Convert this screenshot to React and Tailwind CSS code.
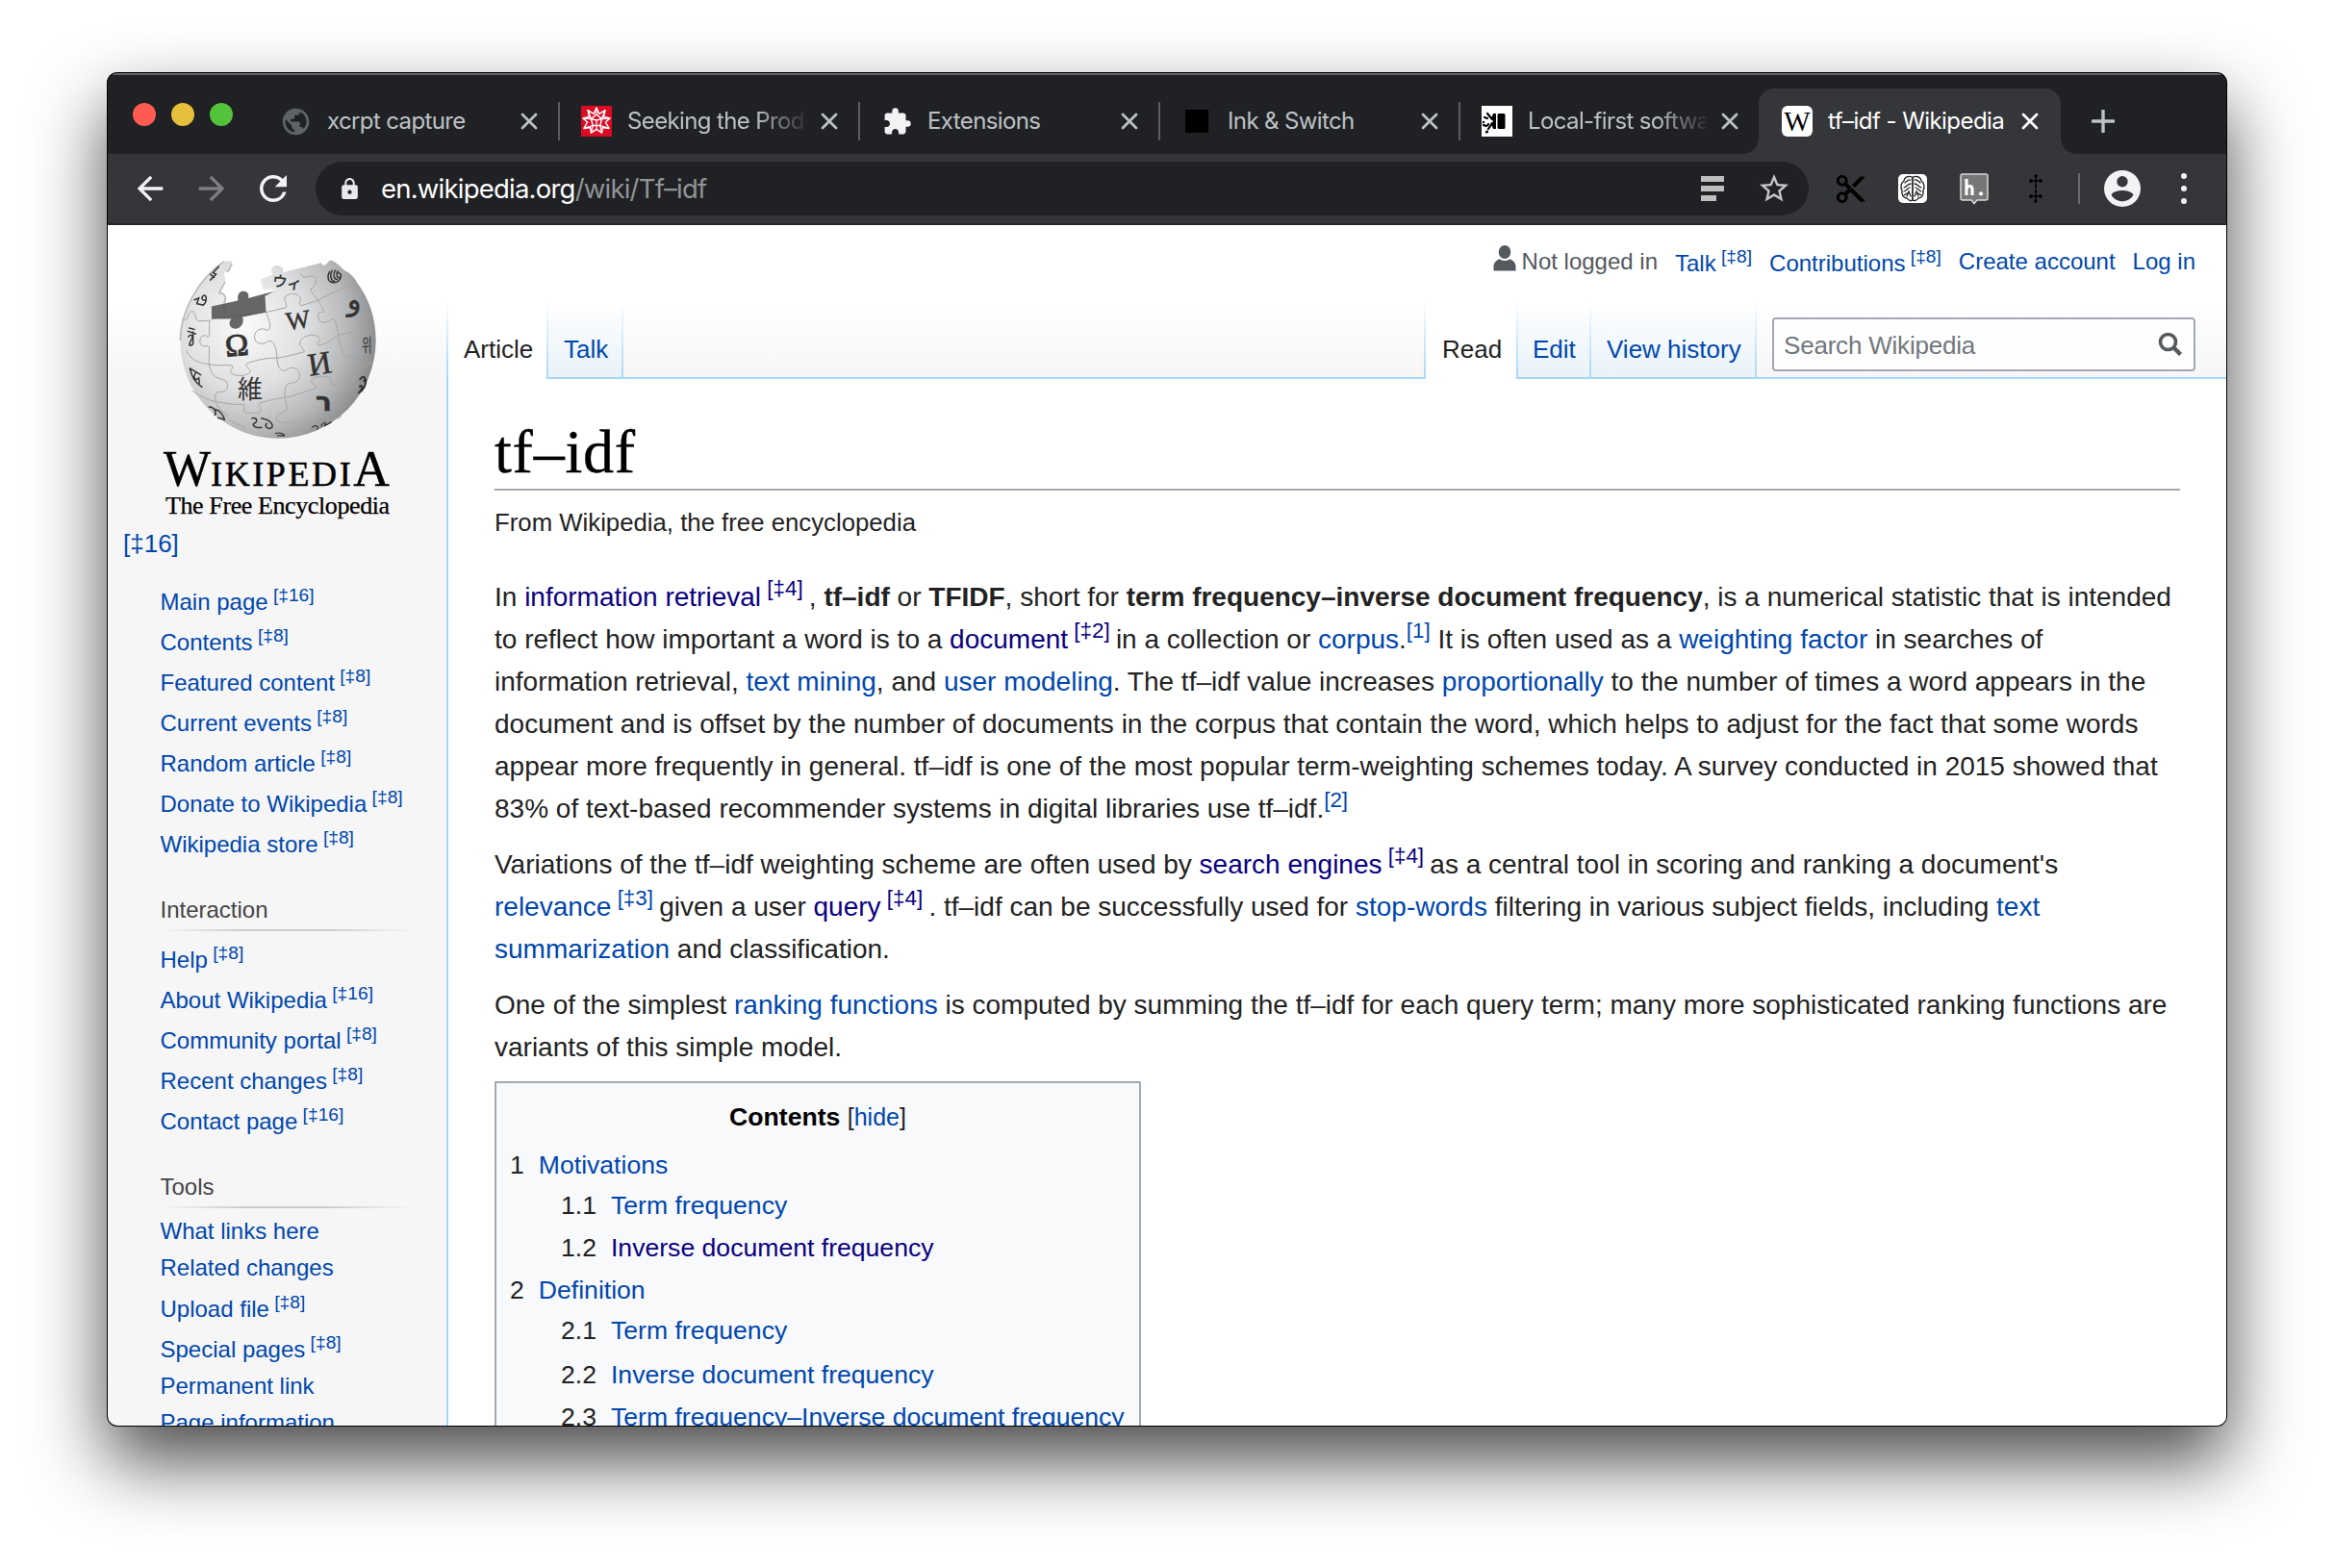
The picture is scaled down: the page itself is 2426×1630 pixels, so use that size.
import React from "react";
import {
  MdPublic,
  MdExtension,
  MdLock,
  MdRefresh,
  MdArrowBack,
  MdArrowForward,
  MdStarBorder,
  MdContentCut,
} from "react-icons/md";

/* ---------- Browser chrome ---------- */

const Cross = ({ className }) => (
  <svg viewBox="0 0 18 18" className={"h-[18px] w-[18px] shrink-0 " + className}>
    <path d="M2 2L16 16M16 2L2 16" stroke="currentColor" strokeWidth="2.8" strokeLinecap="round" />
  </svg>
);

const SpikeyIcon = () => (
  <svg viewBox="0 0 32 32" className="h-8 w-8">
    <rect width="32" height="32" fill="#dd0a24" />
    <g fill="none" stroke="#fff" strokeWidth="1.5" strokeLinejoin="round">
      <path d="M16 2L18.8 8.4L25 4.6L23.6 11.4L30 13L25.4 17L29 23.4L22.4 22.6L21.6 28L16 24.4L10.4 28L9.6 22.6L3 23.4L6.6 17L2 13L8.4 11.4L7 4.600L13.200 8.400Z" />
      <path d="M16 9L21.500 13.500L19.800 20.500H12.200L10.500 13.500Z" />
      <path d="M16 2V9M25 4.600L21.500 13.500M30 13L21.500 13.500M29 23.400L19.800 20.500M21.600 28L19.800 20.500M10.400 28L12.200 20.500M3 23.400L12.200 20.500M2 13L10.500 13.500M7 4.600L10.500 13.500M16 15V24.400M16 15L10.500 13.500M16 15L21.500 13.500" strokeWidth="1.300" />
    </g>
  </svg>
);

const InkIcon = () => (
  <svg viewBox="0 0 32 32" className="h-8 w-8">
    <rect width="32" height="32" fill="#fff" />
    <path d="M12 8H15V24H12L10 19L12 16L10 13Z" fill="#000" />
    <rect x="16.500" y="8" width="8" height="16" rx="1.500" fill="#000" />
    <path d="M6 8L11 14M3 12L6 13M2 20Q6 22 7 19M11 18L7 24" stroke="#000" strokeWidth="2.200" fill="none" strokeLinecap="round" />
    <circle cx="5.500" cy="27" r="1.600" />
    <circle cx="2" cy="17" r="1.200" />
  </svg>
);

const WIcon = () => (
  <span className="flex h-8 w-8 items-center justify-center rounded-[6px] bg-white">
    <span className="font-['Liberation_Serif',serif] text-[29px] leading-8 text-black">W</span>
  </span>
);

const tabs = [
  { title: "xcrpt capture", icon: <MdPublic className="mr-[2px] h-[33px] w-[33px] shrink-0 text-[#5f6368]" /> },
  { title: "Seeking the Prod", icon: <SpikeyIcon />, faded: true },
  { title: "Extensions", icon: <MdExtension className="h-[31px] w-[31px] shrink-0 text-[#f1f3f4]" /> },
  { title: "Ink & Switch", icon: <span className="h-6 w-6 bg-black" /> },
  { title: "Local-first softwa", icon: <InkIcon />, faded: true },
];

const Tab = ({ tab, first }) => (
  <div className="flex h-[68px] w-[312px] shrink-0 items-center">
    <span className={first ? "h-10 w-[2px]" : "h-10 w-[2px] bg-[#5a5c60]"} />
    <span className="ml-[22px] flex h-8 w-8 shrink-0 items-center justify-center">{tab.icon}</span>
    <span
      className={
        "ml-4 w-[185px] text-[24px] leading-[32px] tracking-[-0.62px] whitespace-nowrap text-[#bdc1c6] " +
        (tab.faded ? "[mask-image:linear-gradient(to_right,#000_72%,rgba(0,0,0,0.1))]" : "")
      }
    >
      {tab.title}
    </span>
    <Cross className="ml-4 text-[#bdc1c6]" />
  </div>
);

const TabStrip = () => (
  <div className="flex h-[84px] shrink-0 bg-[#202124] pt-4 shadow-[inset_0_2px_0_#636665]">
    <div className="mt-[15px] ml-[26px] flex w-[130px] gap-4">
      <span className="h-6 w-6 rounded-full bg-[#ff5b52]" />
      <span className="h-6 w-6 rounded-full bg-[#e6c03b]" />
      <span className="h-6 w-6 rounded-full bg-[#53c33b]" />
    </div>
    {tabs.map((t, i) => (
      <Tab key={t.title} tab={t} first={i === 0} />
    ))}
    <div className="relative flex h-[68px] w-[314px] shrink-0 items-center rounded-t-[16px] bg-[#35363a]">
      <span className="absolute bottom-0 -left-4 h-4 w-4 bg-[radial-gradient(circle_at_0_0,transparent_15.5px,#35363a_16px)]" />
      <span className="absolute -right-4 bottom-0 h-4 w-4 bg-[radial-gradient(circle_at_100%_0,transparent_15.5px,#35363a_16px)]" />
      <span className="ml-6">
        <WIcon />
      </span>
      <span className="ml-4 w-[185px] text-[24px] leading-[32px] tracking-[-0.55px] whitespace-nowrap text-white">
        tf–idf - Wikipedia
      </span>
      <Cross className="ml-4 text-white" />
    </div>
    <svg viewBox="0 0 24 24" className="mt-[22px] ml-8 h-6 w-6">
      <path d="M12 1V23M1 12H23" stroke="#bdc1c6" strokeWidth="3.400" strokeLinecap="round" />
    </svg>
  </div>
);

const BrainIcon = () => (
  <svg viewBox="0 0 30 30" className="h-[30px] w-[30px]">
    <rect width="30" height="30" rx="5" fill="#fff" />
    <g fill="none" stroke="#222" strokeWidth="1.300" strokeLinecap="round">
      <path d="M15 3V27" strokeWidth="1.700" />
      <path d="M14 3C10 1 6 4 6 7C3 9 2 14 4 17C3 22 6 25 9 25C11 28 14 28 15 27C16 28 19 28 21 25C24 25 27 22 26 17C28 14 27 9 24 7C24 4 20 1 16 3" />
      <path d="M13 6C10 5 9 8 7 9M13 10C10 10 9 13 6 14M12 14C9 15 9 17 6 18M17 6C20 5 21 8 23 9M17 10C20 10 21 13 24 14M18 14C21 15 21 17 24 18M9 23L11 18L13 23M17 23L19 18L21 23M9 20L6 22M21 20L24 22" />
    </g>
  </svg>
);

const HypothesisIcon = () => (
  <svg viewBox="0 0 30 33" className="h-[33px] w-[30px]">
    <path d="M3 1H27Q29 1 29 3V26Q29 28 27 28H18L15 31.500L12 28H3Q1 28 1 26V3Q1 1 3 1Z" fill="#777" stroke="#d9d9d9" strokeWidth="1.500" />
    <path d="M7 6V23M7 17Q7 13.500 10.200 13.500Q13 13.500 13 17V23" fill="none" stroke="#fff" strokeWidth="3.200" />
    <circle cx="22" cy="21.300" r="2.100" fill="#fff" />
  </svg>
);

const DaggerIcon = () => (
  <svg viewBox="0 0 14 30" className="h-[30px] w-[14px]">
    <path d="M7 1V29M2 7H12M2 23H12" stroke="#000" strokeWidth="1.200" />
    <g fill="#000">
      <circle cx="7" cy="2" r="1.800" />
      <circle cx="7" cy="28" r="1.800" />
      <circle cx="2" cy="7" r="1.900" />
      <circle cx="12" cy="7" r="1.900" />
      <circle cx="2" cy="23" r="1.900" />
      <circle cx="12" cy="23" r="1.900" />
      <circle cx="7" cy="7" r="1.600" />
      <circle cx="7" cy="23" r="1.600" />
      <circle cx="7" cy="12" r="1.200" />
      <circle cx="7" cy="18" r="1.200" />
    </g>
  </svg>
);

const AvatarIcon = () => (
  <svg viewBox="-19 -19 38 38" className="h-[38px] w-[38px]">
    <circle r="19" fill="#f1f3f4" />
    <circle cy="-7.300" r="5.700" fill="#35363a" />
    <path d="M-11.500 6.500C-9.500 3 -4 2 0 2S9.500 3 11.500 6.500C9.500 10.500 4.500 13.300 0 13.300S-9.500 10.500 -11.500 6.500Z" fill="#35363a" />
  </svg>
);

const Toolbar = () => (
  <div className="flex h-[74px] shrink-0 items-center border-b-2 border-[#28282b] bg-[#35363a]">
    <MdArrowBack className="ml-[24px] h-[40px] w-[40px] text-[#f1f3f4]" />
    <MdArrowForward className="ml-[24px] h-[40px] w-[40px] text-[#7d7e81]" />
    <MdRefresh className="ml-[23px] h-[42px] w-[42px] text-[#f1f3f4]" />
    <div className="ml-[23px] flex h-14 w-[1552px] items-center rounded-full bg-[#202124]">
      <MdLock className="ml-[23px] h-[25px] w-[25px] text-[#e8eaed]" />
      <div className="ml-[20px] text-[27.5px] leading-9 tracking-[-0.78px] text-white">
        en.wikipedia.org<span className="text-[#919397]">/wiki/Tf–idf</span>
      </div>
      <div className="ml-auto flex w-6 flex-col gap-1">
        <span className="h-[6px] w-6 bg-[#bdbebe]" />
        <span className="h-[6px] w-6 bg-[#bdbebe]" />
        <span className="h-[6px] w-4 bg-[#bdbebe]" />
      </div>
      <MdStarBorder className="mr-[18px] ml-[34px] h-[36px] w-[36px] text-[#c4c5c7]" />
    </div>
    <MdContentCut className="ml-[26px] h-[35px] w-[35px] text-black" />
    <span className="ml-[32px]">
      <BrainIcon />
    </span>
    <span className="ml-[34px]">
      <HypothesisIcon />
    </span>
    <span className="ml-[42px]">
      <DaggerIcon />
    </span>
    <span className="ml-[37px] h-8 w-[2px] bg-[#6a6b6e]" />
    <span className="ml-[25px]">
      <AvatarIcon />
    </span>
    <div className="ml-[42px] flex flex-col gap-[7px]">
      <span className="h-[6px] w-[6px] rounded-full bg-[#f1f3f4]" />
      <span className="h-[6px] w-[6px] rounded-full bg-[#f1f3f4]" />
      <span className="h-[6px] w-[6px] rounded-full bg-[#f1f3f4]" />
    </div>
  </div>
);

/* ---------- Wikipedia logo ---------- */

const Globe = () => (
  <svg viewBox="225 115 625 570" className="h-[190px] w-[208px]">
    <defs>
      <radialGradient id="ball" gradientUnits="userSpaceOnUse" cx="430" cy="330" r="440">
        <stop offset="0" stopColor="#fafafa" />
        <stop offset="0.450" stopColor="#dedfe0" />
        <stop offset="0.750" stopColor="#b4b6b8" />
        <stop offset="1" stopColor="#808284" />
      </radialGradient>
    </defs>
    <path
      d="M368 126C385 122 398 126 394 134C384 144 392 154 376 158C362 156 376 176 372 190L354 224C372 224 378 240 368 258L330 270V305H385L430 300L500 284L497 232L525 218C515 204 500 220 490 212L482 182L520 168C512 150 520 138 537 139C552 140 556 150 552 160L672 130C684 150 690 126 702 122C720 126 730 142 748 156C760 160 776 176 783 190C820 240 843 300 843 373A305 305 0 0 1 232 373C232 280 290 180 368 126Z"
      fill="url(#ball)"
    />
    <path d="M368 126C290 180 232 280 232 373M394 134C384 144 392 154 376 158M372 190L354 224C372 224 378 240 368 258" fill="none" stroke="#b9bbbc" strokeWidth="5" />
    <path d="M330 266L412 248C410 224 420 219 430 219C444 220 448 230 444 241L525 219L497 234L500 284L426 300C434 318 420 336 405 336C386 336 380 318 392 305H330Z" fill="#666" />
    <path d="M368 262L372 288M330 305L500 284" stroke="#555" strokeWidth="2" fill="none" />
    <g fill="none" stroke="#a3a5a7" strokeWidth="3">
      <path d="M240 306C262 316 250 284 268 282C286 282 274 314 292 312L326 310" />
      <path d="M324 310C320 330 328 360 318 362C306 350 290 362 294 380C300 398 316 386 322 392C326 420 316 440 326 462C336 496 360 490 374 498C388 520 374 536 356 534C336 530 338 560 350 580C364 600 380 606 384 610" />
      <path d="M500 285C510 310 520 332 505 342C488 330 464 338 464 362C466 386 490 388 508 374C524 370 534 400 534 428C536 460 548 470 562 466C580 448 606 462 606 484C602 508 580 502 566 510C552 530 560 560 566 584C562 600 536 596 532 616C536 636 560 628 580 628C600 640 602 656 600 664" />
      <path d="M252 404C262 430 280 442 326 448C350 452 384 448 396 452C396 462 384 468 392 476C408 486 440 484 450 472C454 462 434 456 438 446C470 432 510 426 534 428C560 424 600 414 620 408C618 396 600 392 608 372C624 352 656 352 666 364C672 378 656 380 664 388C690 384 708 368 726 356C760 346 780 350 790 324C800 300 814 292 832 288" />
      <path d="M502 284L562 270C570 258 550 246 562 234C576 222 602 226 608 240C606 254 600 258 610 264L660 248L715 220C740 208 750 202 784 192" />
      <path d="M608 164C616 184 630 170 650 172C664 182 654 206 640 212C640 226 656 234 664 250C674 270 684 280 678 284C660 280 656 310 676 316C700 320 706 298 716 310C722 330 724 344 726 356C730 390 740 420 756 426C780 410 796 440 780 456C760 462 774 490 778 506" />
      <path d="M270 530C300 552 330 564 368 568C400 574 426 572 432 574C432 586 428 594 438 598C460 602 480 600 484 592C484 580 472 576 482 568C520 556 550 552 568 550C600 540 630 530 656 522C660 512 638 510 642 496C660 480 692 482 704 494C708 504 698 510 712 514C740 504 764 500 780 486C790 470 800 458 832 440" />
      <path d="M384 622C410 634 430 640 440 654M736 610C712 624 690 624 690 612M724 560C722 540 748 544 752 528C758 516 780 520 800 510" />
    </g>
    <g fill="#333" stroke="#333" strokeWidth="1.500" textAnchor="middle" fontFamily="Liberation Serif, Noto Sans CJK JP, serif">
      <text x="410" y="420" fontSize="98" strokeWidth="3" transform="rotate(-5 410 400)">Ω</text>
      <text x="600" y="336" fontSize="80" transform="rotate(-8 600 310)">W</text>
      <text x="667" y="478" fontSize="100" transform="rotate(-9 667 446)">И</text>
      <text x="450" y="552" fontSize="78" strokeWidth="0">維</text>
      <text x="566" y="208" fontSize="46" transform="rotate(8 566 192)">ウィ</text>
      <text x="815" y="408" fontSize="58" strokeWidth="0" transform="translate(815 0) scale(0.6 1) translate(-815 0)">위</text>
      <text x="775" y="278" fontSize="92" fontFamily="DejaVu Sans, sans-serif">و</text>
      <text x="680" y="592" fontSize="84" fontFamily="DejaVu Sans, sans-serif" fontWeight="bold">ר</text>
    </g>
    <g fill="none" stroke="#333" strokeWidth="4.500" strokeLinecap="round">
      <path d="M352 142L334 162L344 166L326 184M338 176L326 166" />
      <path d="M276 246L290 240L284 258L304 262C318 250 314 230 306 232C296 236 300 250 308 246" />
      <path d="M256 344L280 352M260 334L276 338M258 362C262 350 276 356 266 372C256 390 262 392 272 384V346" />
      <path d="M262 460L296 480M262 460C268 490 280 506 300 518M280 474C270 490 280 500 290 490L292 506" />
      <path d="M322 580C340 580 346 600 340 606M340 588C356 590 368 608 370 620L350 614" />
      <path d="M456 616C472 610 476 628 462 632C454 640 474 648 486 644M486 616C516 620 526 640 516 646C506 652 494 640 502 632" />
      <path d="M530 664C540 658 556 664 558 670L536 670M644 644C656 634 668 644 660 650M672 640C684 622 690 630 682 640L704 628" strokeWidth="3.500" />
      <path d="M794 494C804 480 814 488 806 500M792 516C800 510 806 520 790 536M812 496C812 520 800 530 790 536" strokeWidth="6" />
      <path d="M698 158C690 176 694 190 708 192M706 154C698 170 702 186 714 188M716 154C708 168 712 182 722 182M724 156C718 166 720 176 728 176M708 192C724 194 736 180 734 166L724 160" />
    </g>
  </svg>
);

const Logo = () => (
  <div className="flex h-[369px] flex-col">
    <div className="ml-[73px] h-[226px] pt-[34px]">
      <Globe />
    </div>
    <div className="ml-[58px] h-[50px] w-[244px] font-['Liberation_Serif',serif] text-[52px] leading-[56px] whitespace-nowrap text-black [-webkit-text-stroke:0.5px_#000]">
      W<span className="text-[36px] tracking-[2.6px]">IKIPEDI</span>A
    </div>
    <div className="ml-[60px] font-['Liberation_Serif',serif] text-[26px] leading-[32px] tracking-[-0.4px] whitespace-nowrap text-black [-webkit-text-stroke:0.25px_#000]">
      The Free Encyclopedia
    </div>
    <div className="mt-[5px] ml-[16px] text-[26px] leading-[36px] text-[#0047ad]">[‡16]</div>
  </div>
);

/* ---------- Sidebar ---------- */

const Note = ({ n }) => <span className="relative -top-[9px] text-[19.2px] leading-none"> [‡{n}]</span>;

const SideLink = ({ label, n }) =>
  n ? (
    <li className="h-[42px] pt-1 text-[24px] leading-[38px] whitespace-nowrap text-[#0047ad]">
      {label}
      <Note n={n} />
    </li>
  ) : (
    <li className="h-[38.4px] text-[24px] leading-[38px] whitespace-nowrap text-[#0047ad]">{label}</li>
  );

const SideHeading = ({ children }) => (
  <h3 className="h-[40px] w-[262px] bg-[linear-gradient(to_right,transparent,#c8ccd1_33%,#c8ccd1_66%,transparent)] bg-[length:100%_2px] bg-bottom bg-no-repeat text-[24px] leading-[36px] text-[#444]">
    {children}
  </h3>
);

const nav = [
  ["Main page", 16],
  ["Contents", 8],
  ["Featured content", 8],
  ["Current events", 8],
  ["Random article", 8],
  ["Donate to Wikipedia", 8],
  ["Wikipedia store", 8],
];
const interaction = [
  ["Help", 8],
  ["About Wikipedia", 16],
  ["Community portal", 8],
  ["Recent changes", 8],
  ["Contact page", 16],
];
const tools = [
  ["What links here"],
  ["Related changes"],
  ["Upload file", 8],
  ["Special pages", 8],
  ["Permanent link"],
  ["Page information"],
];

const LinkList = ({ items }) => (
  <ul>
    {items.map(([label, n]) => (
      <SideLink key={label} label={label} n={n} />
    ))}
  </ul>
);

const Sidebar = () => (
  <aside className="w-[352px] shrink-0">
    <Logo />
    <div className="pl-[54.5px]">
      <LinkList items={nav} />
      <div className="h-[31px]" />
      <SideHeading>Interaction</SideHeading>
      <div className="h-[7px]" />
      <LinkList items={interaction} />
      <div className="h-[31px]" />
      <SideHeading>Tools</SideHeading>
      <div className="h-[5px]" />
      <LinkList items={tools} />
    </div>
  </aside>
);

/* ---------- Page header ---------- */

const Edge = () => <span className="w-[2px] shrink-0 bg-[linear-gradient(to_bottom,transparent,#a7d7f9)]" />;

const PageTab = ({ children, className, active }) => (
  <div
    className={
      "shrink-0 pt-[33px] pl-4 text-[26px] leading-8 whitespace-nowrap " +
      (active
        ? "bg-white text-[#222] "
        : "border-b-2 border-[#a7d7f9] bg-[linear-gradient(to_bottom,#fff,#e8f2f8)] text-[#0047ad] ") +
      className
    }
  >
    {children}
  </div>
);

const Header = () => (
  <header className="h-[160px]">
    <div className="flex h-20 justify-end pt-[22px] pr-8 text-[24px] leading-[32px] whitespace-nowrap text-[#0047ad]">
      <svg viewBox="0 0 24 28" className="-mt-[1px] mr-[6px] h-[28px] w-6" fill="#54595d">
        <ellipse cx="12" cy="7" rx="6.300" ry="7" />
        <path d="M0.500 26.500V22C0.500 17 5 14.500 7 14.500Q12 17.500 17 14.500C19 14.500 23.500 17 23.500 22V26.500Z" />
      </svg>
      <span className="text-[#54595d]">Not logged in</span>
      <span className="ml-[18px] pt-[2px]">
        Talk
        <Note n={8} />
      </span>
      <span className="ml-[18px] pt-[2px]">
        Contributions
        <Note n={8} />
      </span>
      <span className="ml-[18px]">Create account</span>
      <span className="ml-[18px]">Log in</span>
    </div>
    <div className="flex h-20">
      <Edge />
      <PageTab active className="w-[102px]">
        Article
      </PageTab>
      <Edge />
      <PageTab className="w-[76px]">Talk</PageTab>
      <Edge />
      <div className="grow border-b-2 border-[#a7d7f9]" />
      <Edge />
      <PageTab active className="w-[94px]">
        <span className="ml-px">Read</span>
      </PageTab>
      <Edge />
      <PageTab className="w-[74px]">
        <span className="-ml-px">Edit</span>
      </PageTab>
      <Edge />
      <PageTab className="w-[170px]">View history</PageTab>
      <Edge />
      <div className="w-[488px] shrink-0 border-b-2 border-[#a7d7f9] pt-4 pl-4">
        <div className="flex h-14 w-[440px] items-center rounded-[4px] border-2 border-[#a2a9b1] bg-white/80 pl-[10px] text-[26px] leading-8 text-[#72777d]">
          <span className="pt-[2px] tracking-[-0.2px]">Search Wikipedia</span>
          <svg viewBox="0 0 26 26" className="mr-[11px] ml-auto h-[26px] w-[26px]" fill="none" stroke="#54595d">
            <circle cx="10.500" cy="10.500" r="8" strokeWidth="3.600" />
            <path d="M16 16L23.500 23.500" strokeWidth="4.400" />
          </svg>
        </div>
      </div>
    </div>
  </header>
);

/* ---------- Article ---------- */

const A = ({ children }) => <span className="text-[#0047ad]">{children}</span>;
const V = ({ children }) => <span className="text-[#0b0080]">{children}</span>;
const Sup = ({ children }) => <span className="relative -top-[11px] text-[22.4px] leading-none">{children}</span>;
const Mark = ({ n }) => <Sup> [‡{n}] </Sup>;

const toc = [
  ["1", "Motivations", 0, "h-[42px]"],
  ["1.1", "Term frequency", 1, "h-[44px]"],
  ["1.2", "Inverse document frequency", 2, "h-[44px]"],
  ["2", "Definition", 0, "h-[42px]"],
  ["2.1", "Term frequency", 1, "h-[46px]"],
  ["2.2", "Inverse document frequency", 1, "h-[44px]"],
  ["2.3", "Term frequency–Inverse document frequency", 1, "h-[44px]"],
];

const Contents = () => (
  <div className="mt-[13px] h-[500px] w-[672px] border-2 border-[#a2a9b1] bg-[#f8f9fa] pt-[14px] text-[26.6px] text-[#222]">
    <div className="text-center leading-[42px]">
      <b className="text-black">Contents</b>{" "}
      <span className="text-[25px]">
        [<A>hide</A>]
      </span>
    </div>
    <ul className="mt-[8px]">
      {toc.map(([num, label, depth, h]) => (
        <li key={num} className={"flex gap-[15px] leading-[43px] whitespace-nowrap " + h + (depth ? " pl-[67px]" : " pl-[14px]")}>
          <span>{num}</span>
          {depth === 2 ? <V>{label}</V> : <A>{label}</A>}
        </li>
      ))}
    </ul>
  </div>
);

const Article = () => (
  <main className="grow overflow-hidden border-l-2 border-[#a7d7f9] bg-white pt-[34px] pr-[48px] pl-[48px] text-[#222]">
    <h1 className="h-[82px] border-b-2 border-[#a2a9b1] pt-px font-['Liberation_Serif',serif] text-[64px] leading-[81px] tracking-[0.8px] text-black [-webkit-text-stroke:0.4px_#000]">
      tf–idf
    </h1>
    <div className="mt-[13px] text-[25.76px] leading-[40px]">From Wikipedia, the free encyclopedia</div>
    <div className="mt-[36px] space-y-[14px] text-[28px] leading-[44px] whitespace-nowrap">
      <p>
        In <V>information retrieval<Mark n={4} /></V>, <b>tf–idf</b> or <b>TFIDF</b>, short for{" "}
        <b>term frequency–inverse document frequency</b>, is a numerical statistic that is intended
        <br />
        to reflect how important a word is to a <V>document<Mark n={2} /></V>in a collection or{" "}
        <A>corpus</A>.<A><Sup>[1]</Sup></A> It is often used as a <A>weighting factor</A> in searches of
        <br />
        information retrieval, <A>text mining</A>, and <A>user modeling</A>. The tf–idf value increases{" "}
        <A>proportionally</A> to the number of times a word appears in the
        <br />
        document and is offset by the number of documents in the corpus that contain the word, which helps to adjust for the fact that some words
        <br />
        appear more frequently in general. tf–idf is one of the most popular term-weighting schemes today. A survey conducted in 2015 showed that
        <br />
        83% of text-based recommender systems in digital libraries use tf–idf.<A><Sup>[2]</Sup></A>
      </p>
      <p>
        Variations of the tf–idf weighting scheme are often used by <V>search engines<Mark n={4} /></V>as a central tool in scoring and ranking a document's
        <br />
        <A>relevance<Mark n={3} /></A>given a user <V>query<Mark n={4} /></V>. tf–idf can be successfully used for{" "}
        <A>stop-words</A> filtering in various subject fields, including <A>text</A>
        <br />
        <A>summarization</A> and classification.
      </p>
      <p>
        One of the simplest <A>ranking functions</A> is computed by summing the tf–idf for each query term; many more sophisticated ranking functions are
        <br />
        variants of this simple model.
      </p>
    </div>
    <Contents />
  </main>
);

export default function App() {
  return (
    <div className="h-[1630px] w-[2426px] overflow-hidden bg-white px-[111px] pt-[75px] font-['Liberation_Sans',Arial,sans-serif]">
      <div className="rounded-[11px] bg-black p-px shadow-[0_36px_76px_rgba(0,0,0,0.71)]">
        <div className="flex h-[1406px] w-[2202px] flex-col overflow-hidden rounded-[10px]">
          <div className="flex flex-col font-['Inter',sans-serif]">
            <TabStrip />
            <Toolbar />
          </div>
          <div className="flex h-[1248px] overflow-hidden bg-[linear-gradient(to_bottom,#fff_80px,#f6f6f6_160px)]">
            <Sidebar />
            <div className="flex grow flex-col">
              <Header />
              <Article />
            </div>
          </div>
        </div>
      </div>
    </div>
  );
}
